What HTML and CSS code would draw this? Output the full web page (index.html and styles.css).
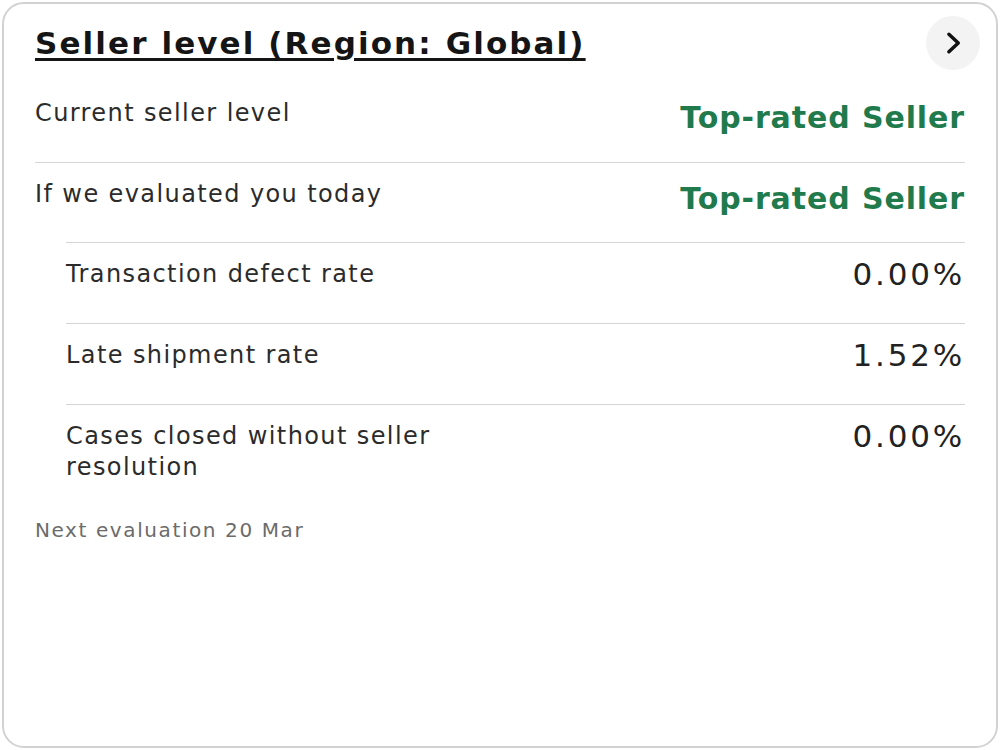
FILE: index.html
```html
<!DOCTYPE html>
<html lang="en">
<head>
    <meta charset="UTF-8">
    <meta name="viewport" content="width=device-width, initial-scale=1.0">
    <title>Seller level</title>
    <link rel="stylesheet" href="styles.css">
</head>
<body>
    <div class="card">
        <div class="card-header">
            <h2 class="card-title"><a href="#">Seller level (Region: Global)</a></h2>
            <button class="icon-btn" aria-label="Open seller level">
                <svg viewBox="0 0 24 24" width="28" height="28">
                    <path d="M8.5 4.5 L16.5 12 L8.5 19.5" fill="none" stroke="#111" stroke-width="3" stroke-linecap="round" stroke-linejoin="round"/>
                </svg>
            </button>
        </div>

        <div class="row first">
            <span class="label">Current seller level</span>
            <span class="value status">Top-rated Seller</span>
        </div>
        <div class="row">
            <span class="label">If we evaluated you today</span>
            <span class="value status">Top-rated Seller</span>
        </div>

        <div class="metrics">
            <div class="row">
                <span class="label">Transaction defect rate</span>
                <span class="value">0.00%</span>
            </div>
            <div class="row">
                <span class="label">Late shipment rate</span>
                <span class="value">1.52%</span>
            </div>
            <div class="row">
                <span class="label">Cases closed without seller resolution</span>
                <span class="value">0.00%</span>
            </div>
        </div>

        <p class="note">Next evaluation 20 Mar</p>
    </div>
</body>
</html>
```

FILE: styles.css
```css
* {
    margin: 0;
    padding: 0;
    box-sizing: border-box;
    font-family: 'DejaVu Sans', 'Liberation Sans', sans-serif;
}
body {
    background: #ffffff;
    padding: 2px;
    height: 100vh;
}
.card {
    height: 100%;
    border: 2px solid #d2d2d2;
    border-radius: 22px;
    padding: 0 31px;
    background: #fff;
}
.card-header {
    height: 78px;
    display: flex;
    justify-content: space-between;
    align-items: center;
}
.card-title {
    font-size: 31px;
    font-weight: bold;
    letter-spacing: 2.1px;
}
.card-title a {
    color: #151515;
    text-decoration: underline;
    text-decoration-thickness: 3px;
    text-underline-offset: 4px;
}
.icon-btn {
    width: 54px;
    height: 54px;
    margin-right: -15px;
    border: none;
    border-radius: 50%;
    background: #f3f3f3;
    display: flex;
    align-items: center;
    justify-content: center;
    cursor: pointer;
}
.row {
    display: flex;
    justify-content: space-between;
    align-items: flex-start;
    min-height: 80px;
    padding-top: 16px;
    border-top: 1px solid #d4d4d4;
}
.row.first {
    border-top: none;
}
.label {
    max-width: 440px;
    font-size: 24px;
    line-height: 31px;
    letter-spacing: 1.4px;
    color: #2b2b2b;
}
.value {
    font-size: 31px;
    line-height: 31px;
    letter-spacing: 2.8px;
    color: #222;
    text-align: right;
}
.value.status {
    padding-top: 4px;
    font-weight: bold;
    font-size: 30px;
    letter-spacing: 0.9px;
    color: #217a4c;
}
.metrics {
    padding-left: 31px;
}
.metrics .row {
    min-height: 81px;
}
.note {
    margin-top: 31px;
    font-size: 20px;
    line-height: 28px;
    letter-spacing: 1.6px;
    color: #6b6b6b;
}
```
